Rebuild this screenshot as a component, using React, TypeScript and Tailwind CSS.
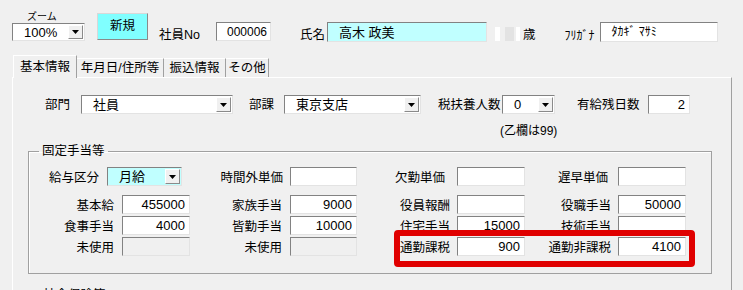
import clsx from "clsx";

const sunken =
  "border border-t-[#828282] border-l-[#828282] border-r-[#e3e3e3] border-b-[#e3e3e3]";

function TextBox({
  className,
  value = "",
  right = false,
  disabled = false,
  bg = "bg-white",
  textClass = "text-[13px]",
  padClass = "pl-[11px]",
}: {
  className: string;
  value?: string;
  right?: boolean;
  disabled?: boolean;
  bg?: string;
  textClass?: string;
  padClass?: string;
}) {
  return (
    <div
      className={clsx(
        sunken,
        "flex items-center shrink-0 whitespace-nowrap overflow-hidden leading-none",
        textClass,
        disabled ? "bg-[#f0f0f0]" : bg,
        right ? "justify-end pr-[4px]" : padClass,
        className
      )}
    >
      {value}
    </div>
  );
}

function Combo({
  className,
  value,
  bg = "bg-white",
}: {
  className: string;
  value: string;
  bg?: string;
}) {
  return (
    <div className={clsx(sunken, bg, "flex items-stretch shrink-0", className)}>
      <span className="flex-1 flex items-center pl-[11px] text-[13px] leading-none whitespace-nowrap">
        {value}
      </span>
      <span className="w-[15px] my-px mr-px flex items-center justify-center bg-[#f0f0f0] border border-t-white border-l-white border-r-[#8a8a8a] border-b-[#8a8a8a]">
        <svg width="7" height="4" viewBox="0 0 7 4">
          <polygon points="0,0 7,0 3.5,4" fill="#000" />
        </svg>
      </span>
    </div>
  );
}

function Label({ className, children }: { className: string; children: string }) {
  return (
    <span className={clsx("shrink-0 text-right whitespace-nowrap text-[12.5px] leading-[16px] mt-[3px]", className)}>
      {children}
    </span>
  );
}

const cols = [
  { lw: "w-[85px]", gap: "ml-[8px]", bw: "w-[68px]" },
  { lw: "w-[92px]", gap: "ml-[8px]", bw: "w-[67px]" },
  { lw: "w-[93px]", gap: "ml-[7px]", bw: "w-[68px]" },
  { lw: "w-[86px]", gap: "ml-[7px]", bw: "w-[68px]" },
];

const rows: [string, string | null][][] = [
  [["基本給", "455000"], ["家族手当", "9000"], ["役員報酬", ""], ["役職手当", "50000"]],
  [["食事手当", "4000"], ["皆勤手当", "10000"], ["住宅手当", "15000"], ["技術手当", ""]],
  [["未使用", null], ["未使用", null], ["通勤課税", "900"], ["通勤非課税", "4100"]],
];

export default function App() {
  return (
    <div className="relative w-[743px] h-[290px] overflow-hidden bg-[#f0f0f0] text-black font-['Liberation_Sans','Noto_Sans_CJK_JP',sans-serif]">
      {/* header */}
      <div className="flex items-start h-[45px]">
        <div className="ml-[12px] w-[73px] flex flex-col">
          <span className="ml-[15px] mt-[11px] text-[10px] leading-[12px]">ズーム</span>
          <Combo className="w-[73px] h-[18px]" value="100%" />
        </div>
        <button className="ml-[12px] mt-[13px] w-[51px] h-[27px] bg-[#80ffff] border border-t-[#d8d8d8] border-l-[#d8d8d8] border-r-[#8a8a8a] border-b-[#8a8a8a] text-[12.5px] leading-none">
          新規
        </button>
        <span className="ml-[11px] mt-[27px] w-[57px] text-[12.5px] leading-[16px]">社員No</span>
        <TextBox className="mt-[22px] w-[55px] h-[19px]" value="000006" textClass="text-[12px]" padClass="pl-[10px]" />
        <span className="ml-[29px] mt-[27px] w-[27px] text-[12.5px] leading-[16px]">氏名</span>
        <TextBox className="mt-[22px] w-[160px] h-[20px]" value="高木 政美" bg="bg-[#c0ffff]" />
        <div className="ml-[8px] mt-[27px] h-[14px] flex">
          <span className="w-[5px] bg-white" />
          <span className="ml-[5px] w-[9px] bg-[#e3e3e3]" />
          <span className="ml-[2px] w-[4px] bg-white" />
        </div>
        <span className="ml-[3px] mt-[27px] text-[12.5px] leading-[16px]">歳</span>
        <span className="ml-[29px] mt-[28px] w-[35px] text-[12px] leading-[16px]">ﾌﾘｶﾞﾅ</span>
        <TextBox className="mt-[22px] w-[118px] h-[20px]" value="ﾀｶｷﾞ ﾏｻﾐ" textClass="text-[12px]" />
      </div>

      {/* tabs */}
      <div className="mt-[10px] ml-[12px] flex items-end text-[12.5px] leading-none">
        <div className="relative z-10 -mb-px ml-px h-[23px] w-[64px] flex items-center justify-center bg-[#f0f0f0] border-t border-l border-white border-r border-r-[#a0a0a0]">
          基本情報
        </div>
        <div className="h-[19px] w-[87px] flex items-center justify-center border-t border-white border-r border-r-[#a0a0a0]">
          年月日/住所等
        </div>
        <div className="h-[19px] w-[62px] flex items-center justify-center border-t border-white border-r border-r-[#a0a0a0]">
          振込情報
        </div>
        <div className="h-[19px] w-[43px] flex items-center justify-center border-t border-white border-r border-r-[#a0a0a0]">
          その他
        </div>
      </div>

      {/* panel */}
      <div className="ml-[12px] w-[720px] h-[240px] border-t border-l border-white border-r border-r-[#a0a0a0]">
        <div className="mt-[17px] flex items-center h-[19px]">
          <span className="ml-[32px] w-[36px] text-[12.5px] leading-[16px]">部門</span>
          <Combo className="w-[152px] h-[19px]" value="社員" />
          <span className="ml-[16px] w-[35px] text-[12.5px] leading-[16px]">部課</span>
          <Combo className="w-[137px] h-[19px]" value="東京支店" />
          <span className="ml-[17px] w-[64px] whitespace-nowrap text-[12.5px] leading-[16px]">税扶養人数</span>
          <Combo className="w-[53px] h-[19px]" value="0" />
          <span className="ml-[22px] w-[71px] whitespace-nowrap text-[12.5px] leading-[16px]">有給残日数</span>
          <TextBox className="w-[42px] h-[19px]" value="2" right />
        </div>
        <div className="mt-[10px] ml-[487px] text-[12px] leading-[14px]">(乙欄は99)</div>

        <fieldset className="mt-[5px] ml-[15px] w-[684px] pb-[17px] border border-[#a0a0a0] shadow-[inset_1px_1px_0_#fff]">
          <legend className="ml-[10px] px-[3px] text-[12.5px] leading-[16px]">固定手当等</legend>
          <div className="mt-[8px] flex items-center h-[19px]">
            <Label className="w-[70px]">給与区分</Label>
            <Combo className="ml-[8px] w-[75px] h-[19px]" value="月給" bg="bg-[#c0ffff]" />
            <Label className="w-[101px]">時間外単価</Label>
            <TextBox className="ml-[7px] w-[67px] h-[19px]" right />
            <Label className="w-[88px]">欠勤単価</Label>
            <TextBox className="ml-[12px] w-[68px] h-[19px]" right />
            <Label className="w-[83px]">遅早単価</Label>
            <TextBox className="ml-[10px] w-[68px] h-[19px]" right />
          </div>
          {rows.map((row, i) => (
            <div key={i} className={clsx("flex items-center h-[19px]", i === 0 ? "mt-[9px]" : "mt-[2px]")}>
              {row.map(([label, value], j) => (
                <div key={j} className="flex items-center">
                  <Label className={cols[j].lw}>{label}</Label>
                  <TextBox
                    className={clsx(cols[j].gap, cols[j].bw, "h-[19px]")}
                    value={value ?? ""}
                    disabled={value === null}
                    right
                  />
                </div>
              ))}
            </div>
          ))}
        </fieldset>

        <div className="mt-[13px] ml-[30px] text-[12.5px] leading-[16px]">社会保険等</div>
      </div>

      {/* highlight */}
      <div className="absolute left-[394px] top-[230px] w-[301px] h-[37px] border-[6px] border-[#e00000] rounded-[4px]" />
    </div>
  );
}
